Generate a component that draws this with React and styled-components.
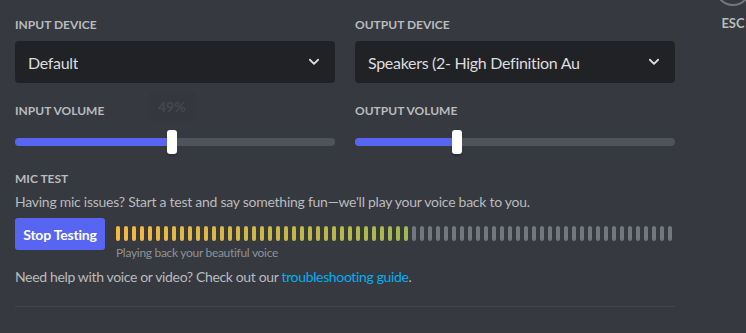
import styled, {createGlobalStyle} from "styled-components";

const GlobalStyle = createGlobalStyle`
    html, body {
        margin: 0;
        padding: 0;
        background: #36393f;
        height: 100%;
        overflow: hidden;
    }
    body {
        font-family: Lato, "Noto Sans", sans-serif;
    }
`;

const Page = styled.div`
    position: relative;
    width: 746px;
    height: 333px;
    background: #36393f;
    padding: 17px 15px 0;
    box-sizing: border-box;
`;

const Content = styled.div`
    width: 660px;
    display: flex;
    flex-direction: column;
`;

const Columns = styled.div`
    display: grid;
    grid-template-columns: 320px 320px;
    column-gap: 20px;
`;

const Column = styled.div`
    display: flex;
    flex-direction: column;
`;

const Label = styled.h5`
    margin: ${props => props.$top ?? 0}px 0 ${props => props.$bottom ?? 8}px;
    font-size: 12px;
    line-height: 16px;
    font-weight: 700;
    color: #b9bbbe;
    text-transform: uppercase;
`;

const Select = styled.div`
    height: 42px;
    background: #202225;
    border-radius: 4px;
    display: flex;
    align-items: center;
    justify-content: space-between;
    padding: 0 12px 0 13px;
    box-sizing: border-box;
    color: #dcddde;
    font-size: 16px;
    letter-spacing: -0.3px;
    .value {
        white-space: nowrap;
        overflow: hidden;
    }
`;

const SliderWrap = styled.div`
    position: relative;
    height: 24px;
    margin-top: 11px;
    display: flex;
    align-items: center;
`;

const Track = styled.div`
    width: 100%;
    height: 8px;
    border-radius: 4px;
    background: #4f545c;
    overflow: hidden;
    .fill {
        height: 100%;
        background: #5865f2;
    }
`;

const Grabber = styled.div`
    position: absolute;
    top: 0;
    width: 10px;
    height: 24px;
    margin-left: -5px;
    border-radius: 3px;
    background: #fff;
    box-shadow: 0 3px 1px rgba(0, 0, 0, 0.08), 0 2px 2px rgba(0, 0, 0, 0.06);
`;

const Tip = styled.div`
    position: absolute;
    top: -37px;
    transform: translateX(-50%);
    padding: 4px 10px;
    border-radius: 5px;
    background: #202225;
    color: #fff;
    font-size: 14px;
    font-weight: 700;
    line-height: 20px;
    opacity: 0.07;
`;

const Description = styled.p`
    margin: 5px 0 0;
    font-size: 14px;
    line-height: 20px;
    letter-spacing: -0.26px;
    color: #b9bbbe;
`;

const TestRow = styled.div`
    display: flex;
    align-items: flex-start;
    gap: 11px;
    margin-top: 6px;
`;

const Button = styled.button`
    width: 90px;
    height: 32px;
    border: 0;
    border-radius: 3px;
    background: #5865f2;
    color: #fff;
    font-family: inherit;
    font-size: 14px;
    font-weight: 700;
    letter-spacing: -0.2px;
    padding: 0;
    cursor: pointer;
`;

const Meter = styled.div`
    display: flex;
    flex-direction: column;
    padding-top: 8px;
`;

const Bars = styled.div`
    display: flex;
    gap: 4px;
`;

const Bar = styled.div`
    width: 4px;
    height: 15px;
    border-radius: 2px;
    background: ${props => props.$color};
`;

const Caption = styled.div`
    margin-top: 4px;
    font-size: 12px;
    line-height: 16px;
    letter-spacing: -0.3px;
    color: #8e9297;
`;

const Help = styled.p`
    margin: 6px 0 0;
    font-size: 14px;
    line-height: 20px;
    letter-spacing: -0.35px;
    color: #b9bbbe;
    a {
        color: #00aff4;
        text-decoration: none;
    }
`;

const Divider = styled.div`
    margin-top: 19px;
    height: 1px;
    background: #42454b;
`;

const Close = styled.div`
    position: absolute;
    top: -30px;
    left: 715px;
    width: 36px;
    display: flex;
    flex-direction: column;
    align-items: center;
    .circle {
        width: 36px;
        height: 36px;
        box-sizing: border-box;
        border: 2px solid #72767d;
        border-radius: 50%;
    }
    .key {
        margin-top: 9px;
        font-size: 13px;
        font-weight: 700;
        line-height: 16px;
        color: #b9bbbe;
    }
`;

const Chevron = () => (
    <svg width="18" height="18" viewBox="0 0 24 24">
        <path d="M6.5 9l5.5 5.5 5.5-5.5" fill="none" stroke="#dcddde" strokeWidth="2.4" strokeLinecap="round" strokeLinejoin="round" />
    </svg>
);

const Slider = ({value, tip}) => (
    <SliderWrap>
        <Track>
            <div className="fill" style={{width: `${value}%`}} />
        </Track>
        <Grabber style={{left: `${value}%`}} />
        {tip && <Tip style={{left: `${value}%`}}>{tip}</Tip>}
    </SliderWrap>
);

const BAR_COUNT = 70;
const LIT = 37;

const mix = (a, b, t) => Math.round(a + (b - a) * t);
const barColor = i => {
    if (i >= LIT) return "#72767d";
    const t = i / (LIT - 1);
    return `rgb(${mix(248, 163, t)}, ${mix(183, 185, t)}, ${mix(62, 74, t)})`;
};

const App = () => {
    const bars = Array.from({length: BAR_COUNT}, (_, i) => i);
    return (
        <>
            <GlobalStyle />
            <Page>
                <Content>
                    <Columns>
                        <Column>
                            <Label>Input Device</Label>
                            <Select>
                                <span className="value">Default</span>
                                <Chevron />
                            </Select>
                            <Label $top={20} $bottom={0}>Input Volume</Label>
                            <Slider value={49} tip="49%" />
                        </Column>
                        <Column>
                            <Label>Output Device</Label>
                            <Select>
                                <span className="value">Speakers (2- High Definition Au</span>
                                <Chevron />
                            </Select>
                            <Label $top={20} $bottom={0}>Output Volume</Label>
                            <Slider value={32} />
                        </Column>
                    </Columns>
                    <Label $top={17} $bottom={0}>Mic Test</Label>
                    <Description>
                        Having mic issues? Start a test and say something fun—we'll play your voice back to you.
                    </Description>
                    <TestRow>
                        <Button>Stop Testing</Button>
                        <Meter>
                            <Bars>
                                {bars.map(i => (
                                    <Bar key={i} $color={barColor(i)} />
                                ))}
                            </Bars>
                            <Caption>Playing back your beautiful voice</Caption>
                        </Meter>
                    </TestRow>
                    <Help>
                        Need help with voice or video? Check out our <a href="#">troubleshooting guide</a>.
                    </Help>
                    <Divider />
                </Content>
                <Close>
                    <div className="circle" />
                    <div className="key">ESC</div>
                </Close>
            </Page>
        </>
    );
};

export default App;
